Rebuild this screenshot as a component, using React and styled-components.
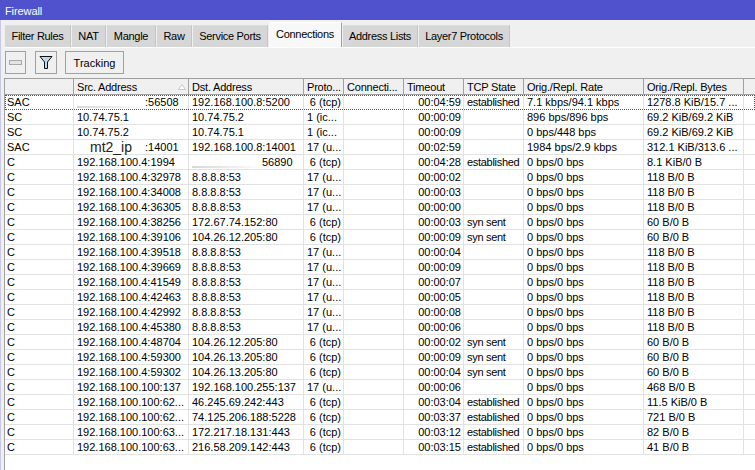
import React from 'react';
import styled, { createGlobalStyle } from 'styled-components';

const GlobalStyle = createGlobalStyle`
    html, body {
        margin: 0;
        padding: 0;
        height: 100%;
        background: #f0f0f0;
    }
    #root {
        height: 100%;
    }
`;

const Window = styled.div`
    width: 755px;
    height: 470px;
    overflow: hidden;
    box-sizing: border-box;
    display: flex;
    flex-direction: column;
    background: #f0f0f0;
    font-family: "Liberation Sans", Arial, sans-serif;
    font-size: 11px;
    color: #000;
`;

const TitleBar = styled.div`
    height: 20px;
    flex: none;
    box-sizing: border-box;
    padding: 4px 0 0 5px;
    background: #4f52cc;
    color: #fff;
    line-height: 15px;
    letter-spacing: -0.1px;
`;

const Content = styled.div`
    flex: 1;
    min-height: 0;
    display: flex;
    flex-direction: column;
    padding-left: 4px;
    border-left: 1px solid #c8c8e8;
`;

const Tabs = styled.div`
    display: flex;
    align-items: flex-end;
    height: 27px;
    flex: none;
    gap: 1px;
    border-bottom: 1px solid #fff;
`;

const Tab = styled.div`
    box-sizing: border-box;
    width: ${p => p.$w}px;
    height: ${p => (p.$active ? 25 : 22)}px;
    padding-top: ${p => (p.$active ? 4 : 3)}px;
    line-height: 15px;
    letter-spacing: -0.3px;
    text-align: center;
    background: ${p => (p.$active ? '#f8f8f8' : '#d6d6d6')};
    border-top: 1px solid ${p => (p.$active ? '#fff' : '#dcdcdc')};
    border-right: 1px solid ${p => (p.$active ? '#a0a0a0' : '#c4c4c4')};
`;

const Toolbar = styled.div`
    display: flex;
    align-items: center;
    height: 23px;
    flex: none;
    margin-top: 3px;
    margin-bottom: 4px;
`;

const ToolButton = styled.div`
    box-sizing: border-box;
    width: ${p => p.$w}px;
    height: 23px;
    margin-right: ${p => p.$gap}px;
    display: flex;
    align-items: center;
    justify-content: center;
    background: #f0f0f0;
    border: 1px solid #a0a0a0;
`;

const Table = styled.div`
    flex: 1;
    min-height: 0;
    margin-left: -1px;
    background: #fff;
    border-left: 1px solid #a0a0a0;
`;

const HeaderRow = styled.div`
    display: flex;
    height: 17px;
    box-sizing: border-box;
    background: #f0f0f0;
    border-top: 1px solid #a0a0a0;
    border-bottom: 1px solid #a0a0a0;
`;

const HeaderCell = styled.div`
    box-sizing: border-box;
    width: ${p => p.$w}px;
    flex: none;
    display: flex;
    align-items: center;
    justify-content: space-between;
    padding: 0 2px 0 3px;
    border-right: 1px solid #a0a0a0;
    white-space: nowrap;
    overflow: hidden;
    letter-spacing: -0.2px;
`;

const Row = styled.div`
    display: flex;
    height: 15px;
    box-sizing: border-box;
    border-bottom: 1px solid ${p => (p.$focus ? 'transparent' : '#e2e2e2')};
    outline: ${p => (p.$focus ? '1px dotted #555' : 'none')};
    outline-offset: -1px;
`;

const Cell = styled.div`
    box-sizing: border-box;
    width: ${p => p.$w}px;
    flex: none;
    display: flex;
    align-items: center;
    justify-content: ${p => (p.$right ? 'flex-end' : 'flex-start')};
    padding: 0 2px 0 ${p => (p.$first ? 2 : 3)}px;
    border-right: 1px solid #e2e2e2;
    white-space: nowrap;
    overflow: ${p => (p.$open ? 'visible' : 'hidden')};
    line-height: 14px;
    letter-spacing: ${p => (p.$tight ? '-0.3px' : '0')};
`;

const Smudge = styled.span`
    display: inline-block;
    flex: none;
    width: ${p => p.$w}px;
    height: 2px;
    margin-top: 9px;
    background: linear-gradient(90deg, #d8d8d8, #eeeeee 60%, #fff);
`;

const Masked = styled.span`
    flex: none;
    width: ${p => p.$w}px;
    text-align: center;
    font-size: 14px;
    color: #222;
`;

const widths = [69, 115, 115, 40, 60, 60, 60, 120, 100, 12];
const headers = ['', 'Src. Address', 'Dst. Address', 'Proto...', 'Connecti...', 'Timeout', 'TCP State', 'Orig./Repl. Rate', 'Orig./Repl. Bytes', ''];
const tabs = [
    ['Filter Rules', 66], ['NAT', 34], ['Mangle', 49], ['Raw', 35], ['Service Ports', 75],
    ['Connections', 73, true], ['Address Lists', 75], ['Layer7 Protocols', 91],
];

const rows = [
    ['SAC', <><Smudge $w={68} />:56508</>, '192.168.100.8:5200', '6 (tcp)', '00:04:59', 'established', '7.1 kbps/94.1 kbps', '1278.8 KiB/15.7 ...'],
    ['SC', '10.74.75.1', '10.74.75.2', '1 (ic...', '00:00:09', '', '896 bps/896 bps', '69.2 KiB/69.2 KiB'],
    ['SC', '10.74.75.2', '10.74.75.1', '1 (ic...', '00:00:09', '', '0 bps/448 bps', '69.2 KiB/69.2 KiB'],
    ['SAC', <><Masked $w={68}>mt2_ip</Masked>:14001</>, '192.168.100.8:14001', '17 (u...', '00:02:59', '', '1984 bps/2.9 kbps', '312.1 KiB/313.6 ...'],
    ['C', '192.168.100.4:1994', <><Smudge $w={70} />56890</>, '6 (tcp)', '00:04:28', 'established', '0 bps/0 bps', '8.1 KiB/0 B'],
    ['C', '192.168.100.4:32978', '8.8.8.8:53', '17 (u...', '00:00:02', '', '0 bps/0 bps', '118 B/0 B'],
    ['C', '192.168.100.4:34008', '8.8.8.8:53', '17 (u...', '00:00:03', '', '0 bps/0 bps', '118 B/0 B'],
    ['C', '192.168.100.4:36305', '8.8.8.8:53', '17 (u...', '00:00:00', '', '0 bps/0 bps', '118 B/0 B'],
    ['C', '192.168.100.4:38256', '172.67.74.152:80', '6 (tcp)', '00:00:03', 'syn sent', '0 bps/0 bps', '60 B/0 B'],
    ['C', '192.168.100.4:39106', '104.26.12.205:80', '6 (tcp)', '00:00:09', 'syn sent', '0 bps/0 bps', '60 B/0 B'],
    ['C', '192.168.100.4:39518', '8.8.8.8:53', '17 (u...', '00:00:04', '', '0 bps/0 bps', '118 B/0 B'],
    ['C', '192.168.100.4:39669', '8.8.8.8:53', '17 (u...', '00:00:09', '', '0 bps/0 bps', '118 B/0 B'],
    ['C', '192.168.100.4:41549', '8.8.8.8:53', '17 (u...', '00:00:07', '', '0 bps/0 bps', '118 B/0 B'],
    ['C', '192.168.100.4:42463', '8.8.8.8:53', '17 (u...', '00:00:05', '', '0 bps/0 bps', '118 B/0 B'],
    ['C', '192.168.100.4:42992', '8.8.8.8:53', '17 (u...', '00:00:08', '', '0 bps/0 bps', '118 B/0 B'],
    ['C', '192.168.100.4:45380', '8.8.8.8:53', '17 (u...', '00:00:06', '', '0 bps/0 bps', '118 B/0 B'],
    ['C', '192.168.100.4:48704', '104.26.12.205:80', '6 (tcp)', '00:00:02', 'syn sent', '0 bps/0 bps', '60 B/0 B'],
    ['C', '192.168.100.4:59300', '104.26.13.205:80', '6 (tcp)', '00:00:09', 'syn sent', '0 bps/0 bps', '60 B/0 B'],
    ['C', '192.168.100.4:59302', '104.26.13.205:80', '6 (tcp)', '00:00:04', 'syn sent', '0 bps/0 bps', '60 B/0 B'],
    ['C', '192.168.100.100:137', '192.168.100.255:137', '17 (u...', '00:00:06', '', '0 bps/0 bps', '468 B/0 B'],
    ['C', '192.168.100.100:62...', '46.245.69.242:443', '6 (tcp)', '00:03:04', 'established', '0 bps/0 bps', '11.5 KiB/0 B'],
    ['C', '192.168.100.100:62...', '74.125.206.188:5228', '6 (tcp)', '00:03:37', 'established', '0 bps/0 bps', '721 B/0 B'],
    ['C', '192.168.100.100:63...', '172.217.18.131:443', '6 (tcp)', '00:03:12', 'established', '0 bps/0 bps', '82 B/0 B'],
    ['C', '192.168.100.100:63...', '216.58.209.142:443', '6 (tcp)', '00:03:15', 'established', '0 bps/0 bps', '41 B/0 B'],
];

const App = () => {
    return (
        <Window>
            <GlobalStyle />
            <TitleBar>Firewall</TitleBar>
            <Content>
                <Tabs>
                    {tabs.map(([label, w, active]) => (
                        <Tab key={label} $w={w} $active={active}>{label}</Tab>
                    ))}
                </Tabs>
                <Toolbar>
                    <ToolButton $w={21} $gap={9}>
                        <svg width="13" height="5"><rect x="0.5" y="0.5" width="12" height="4" fill="#e4e4e4" stroke="#a8a8a8" /></svg>
                    </ToolButton>
                    <ToolButton $w={22} $gap={8}>
                        <svg width="14" height="15" viewBox="0 0 14 15">
                            <path d="M1 1.5h12L8.5 7v6.5h-3V7z" fill="#bcd8ee" stroke="#111" />
                        </svg>
                    </ToolButton>
                    <ToolButton $w={59} $gap={0}>Tracking</ToolButton>
                </Toolbar>
                <Table>
                    <HeaderRow>
                        {headers.map((h, i) => (
                            <HeaderCell key={i} $w={widths[i]}>
                                {h}
                                {i === 1 && (
                                    <svg width="8" height="6"><path d="M4 .5L7.5 5.5H.5z" fill="#fff" stroke="#c8c8c8" /></svg>
                                )}
                            </HeaderCell>
                        ))}
                    </HeaderRow>
                    {rows.map((r, i) => (
                        <Row key={i} $focus={i === 0}>
                            <Cell $w={widths[0]} $first>{r[0]}</Cell>
                            <Cell $w={widths[1]} $open={i === 3}>{r[1]}</Cell>
                            <Cell $w={widths[2]}>{r[2]}</Cell>
                            <Cell $w={widths[3]} $right={r[3] === '6 (tcp)'}>{r[3]}</Cell>
                            <Cell $w={widths[4]} />
                            <Cell $w={widths[5]} $right>{r[4]}</Cell>
                            <Cell $w={widths[6]} $tight>{r[5]}</Cell>
                            <Cell $w={widths[7]}>{r[6]}</Cell>
                            <Cell $w={widths[8]}>{r[7]}</Cell>
                            <Cell $w={widths[9]} />
                        </Row>
                    ))}
                </Table>
            </Content>
        </Window>
    );
};

export default App;
